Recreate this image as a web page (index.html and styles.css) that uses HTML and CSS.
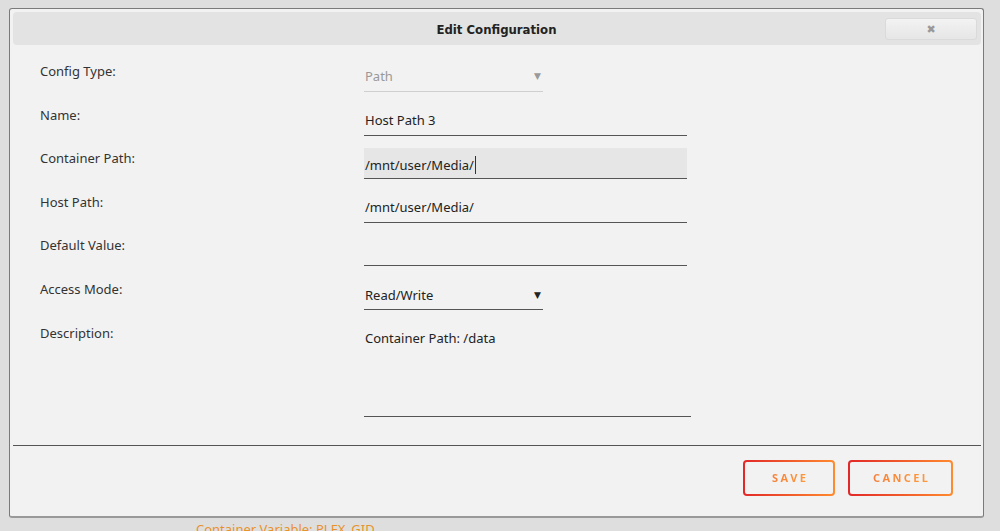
FILE: index.html
```html
<!DOCTYPE html>
<html>
<head>
<meta charset="utf-8">
<link rel="stylesheet" href="styles.css">
</head>
<body>
<div class="page">
  <div class="bg-text">Container Variable: PLEX_GID</div>
</div>
<div class="dialog">
  <div class="titlebar">
    <div class="title">Edit Configuration</div>
    <div class="close"><span>✖</span></div>
  </div>
  <div class="form">
    <div class="label">Config Type:</div>
    <div class="field select disabled"><span>Path</span><span class="arrow">▼</span></div>
    <div class="label">Name:</div>
    <div class="field wide">Host Path 3</div>
    <div class="label">Container Path:</div>
    <div class="field wide focus">/mnt/user/Media/<span class="caret"></span></div>
    <div class="label">Host Path:</div>
    <div class="field wide">/mnt/user/Media/</div>
    <div class="label">Default Value:</div>
    <div class="field wide"></div>
    <div class="label">Access Mode:</div>
    <div class="field select"><span>Read/Write</span><span class="arrow dark">▼</span></div>
    <div class="label">Description:</div>
    <div class="field area">Container Path: /data</div>
  </div>
  <div class="rule"></div>
  <div class="actions">
    <div class="btn save"><span>SAVE</span></div>
    <div class="btn cancel"><span>CANCEL</span></div>
  </div>
</div>
</body>
</html>
```
FILE: styles.css
```css
html, body {
  margin: 0;
  padding: 0;
}
body {
  background: #dedede;
  font-family: "Noto Sans", "Open Sans", sans-serif;
  font-size: 13px;
  color: #333;
  width: 1000px;
  height: 531px;
  overflow: hidden;
}
.page {
  padding: 520px 0 0 196px;
}
.bg-text {
  color: #e8922c;
  font-size: 13px;
  line-height: 18px;
}
.dialog {
  position: absolute;
  left: 9px;
  top: 8px;
  width: 973px;
  height: 507px;
  background: #f2f2f2;
  border: 1px solid #7a7a7a;
  border-bottom: 2px solid #999;
  border-radius: 3px;
  box-sizing: content-box;
}
.titlebar {
  margin: 3px 2px 0 3px;
  height: 33px;
  background: #e3e3e3;
  border-radius: 4px;
  display: flex;
  align-items: center;
  justify-content: center;
  position: relative;
}
.title {
  font-family: "DejaVu Sans Condensed", "DejaVu Sans", sans-serif;
  font-weight: bold;
  font-size: 13px;
  color: #222;
  margin-left: -1px;
  padding-top: 2px;
}
.close {
  position: absolute;
  right: 4px;
  top: 6px;
  width: 90px;
  height: 20px;
  border: 1px solid #dadada;
  border-radius: 3px;
  background: linear-gradient(#f3f3f3, #ececec 50%, #e6e6e6);
  display: flex;
  align-items: center;
  justify-content: center;
  color: #999;
  font-size: 11px;
  font-family: "DejaVu Sans", sans-serif;
}
.form {
  display: grid;
  grid-template-columns: 324px 1fr;
  row-gap: 12.6px;
  padding: 16px 0 0 30px;
  align-items: start;
}
.label {
  line-height: 20px;
  color: #333;
}
.field {
  height: 31px;
  box-sizing: border-box;
  border-bottom: 1px solid #555;
  padding: 5px 0 0 1px;
  line-height: 20px;
  color: #222;
  width: 323px;
}
.field.focus {
  background: #e6e6e6;
  padding-top: 7px;
}
.caret {
  display: inline-block;
  width: 1px;
  height: 18px;
  background: #333;
  vertical-align: -4px;
  margin-left: 1px;
}
.field.select {
  width: 179px;
  display: flex;
  justify-content: space-between;
  padding-right: 1px;
  padding-top: 6px;
}
.field.select.disabled {
  color: #999;
  border-bottom-color: #cfcfcf;
  padding-top: 5px;
}
.arrow {
  font-family: "DejaVu Sans", sans-serif;
  font-size: 9px;
  color: #999;
  margin-right: 1px;
}
.arrow.dark {
  color: #222;
}
.field.area {
  height: 94px;
  width: 327px;
  padding-top: 5px;
}
.rule {
  margin: 28px 2px 0 3px;
  height: 1px;
  background: #555;
}
.actions {
  display: flex;
  justify-content: flex-end;
  gap: 13px;
  padding: 14px 30px 0 0;
}
.btn {
  height: 36px;
  box-sizing: border-box;
  border: 2px solid transparent;
  border-radius: 4px;
  background: linear-gradient(#f2f2f2, #f2f2f2) padding-box,
              linear-gradient(90deg, #e22828, #ff8b2f) border-box;
  display: flex;
  align-items: center;
  justify-content: center;
  font-family: "Noto Sans", sans-serif;
  font-weight: bold;
  font-size: 11px;
  letter-spacing: 2.4px;
}
.btn span {
  background: linear-gradient(90deg, #f5803a, #ff9a3a);
  -webkit-background-clip: text;
  background-clip: text;
  color: transparent;
  margin-right: -2.4px;
}
.btn.save { width: 92px; }
.btn.cancel { width: 105px; }
```
